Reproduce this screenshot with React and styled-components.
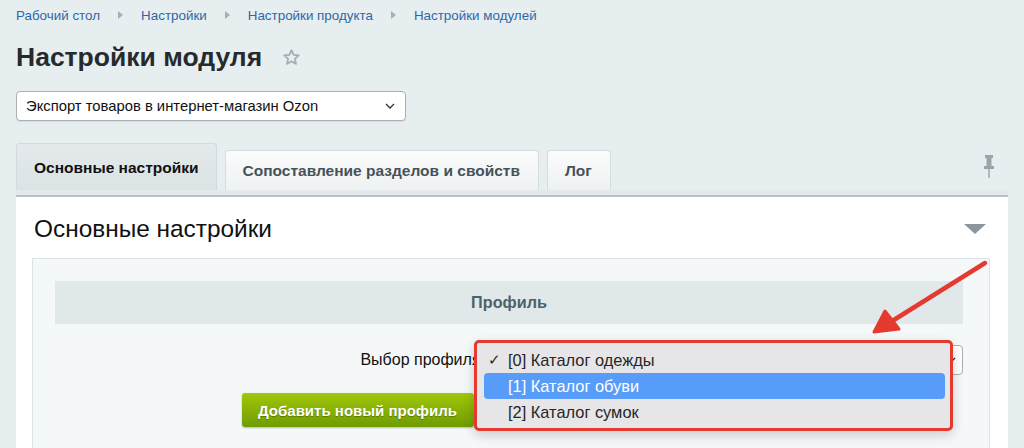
import React from 'react';
import styled, { createGlobalStyle } from 'styled-components';

const GlobalStyle = createGlobalStyle`
  html, body {
    margin: 0;
    padding: 0;
    background: #e7eef0;
    font-family: "Liberation Sans", Arial, sans-serif;
  }
`;

const Page = styled.div`
  width: 1024px;
  height: 448px;
  overflow: hidden;
  box-sizing: border-box;
  padding: 7px 16px 0 16px;
`;

const Breadcrumbs = styled.div`
  display: flex;
  align-items: center;
  height: 16px;
  font-size: 13.4px;
  color: #2f67a6;
`;

const Crumb = styled.span`
  white-space: nowrap;
`;

const CrumbSep = styled.span`
  width: 0;
  height: 0;
  margin: 0 18px 0 18px;
  border-top: 4px solid transparent;
  border-bottom: 4px solid transparent;
  border-left: 5px solid #a6b1b5;
`;

const TitleRow = styled.div`
  display: flex;
  align-items: center;
  margin-top: 18px;
  height: 32px;
`;

const Title = styled.h1`
  margin: 0;
  font-size: 26.5px;
  font-weight: 700;
  color: #262a2c;
  line-height: 32px;
`;

const StarIcon = styled.svg`
  margin-left: 20px;
  margin-top: 1px;
`;

const ModuleSelect = styled.div`
  margin-top: 18px;
  width: 390px;
  height: 30px;
  box-sizing: border-box;
  display: flex;
  align-items: center;
  justify-content: space-between;
  padding: 0 10px 0 9px;
  background: #fff;
  border: 1px solid #a9b1b4;
  border-radius: 4px;
  font-size: 14.8px;
  color: #111;
  box-shadow: 0 1px 1px rgba(0, 0, 0, 0.08);
`;

const TabsRow = styled.div`
  display: flex;
  align-items: flex-end;
  gap: 8px;
  margin-top: 22px;
  height: 47px;
`;

const Tab = styled.div`
  height: ${p => (p.active ? 47 : 40)}px;
  box-sizing: border-box;
  display: flex;
  align-items: center;
  padding: ${p => (p.active ? '1px 17px 0' : '0 18px 0 17px')};
  border: 1px solid ${p => (p.active ? '#d3dadd' : '#d6dcde')};
  border-bottom: none;
  border-radius: 4px 4px 0 0;
  background: ${p =>
    p.active
      ? 'linear-gradient(#e4eaec, #dbe3e5)'
      : 'linear-gradient(#fbfcfc, #eef1f2)'};
  font-size: 15.5px;
  font-weight: 700;
  color: ${p => (p.active ? '#111' : '#45525a')};
  white-space: nowrap;
`;

const PinBox = styled.div`
  margin-left: auto;
  align-self: center;
  padding-right: 13px;
  display: flex;
`;

const Band = styled.div`
  height: 7px;
  box-sizing: border-box;
  background: #e3eaec;
  border-bottom: 2px solid #b8c2c6;
  width: 992px;
`;

const Panel = styled.div`
  width: 992px;
  height: 260px;
  background: #fff;
  box-sizing: border-box;
`;

const PanelHead = styled.div`
  height: 61px;
  display: flex;
  align-items: center;
  justify-content: space-between;
  padding: 0 22px 0 18px;
`;

const PanelTitle = styled.h2`
  margin: 0;
  margin-top: 2px;
  font-size: 24.4px;
  font-weight: 400;
  color: #111;
`;

const Collapse = styled.span`
  width: 0;
  height: 0;
  border-left: 11px solid transparent;
  border-right: 11px solid transparent;
  border-top: 10px solid #8d959a;
  margin-top: 2px;
`;

const InnerBox = styled.div`
  position: relative;
  margin: 0 18px 0 16px;
  height: 200px;
  box-sizing: border-box;
  background: #f5f8f9;
  border: 1px solid #dbe3e6;
  border-bottom: none;
  padding: 22px 26px 0 22px;
`;

const SectionHead = styled.div`
  height: 43px;
  display: flex;
  align-items: center;
  justify-content: center;
  background: #e0e8ea;
  font-size: 16.2px;
  font-weight: 700;
  color: #4d6268;
`;

const FormRow = styled.div`
  display: grid;
  grid-template-columns: 432px 1fr;
  align-items: center;
  margin-top: 21px;
  height: 30px;
`;

const Label = styled.div`
  text-align: right;
  font-size: 16px;
  color: #111;
  padding-right: 2px;
  white-space: nowrap;
`;

const FieldCell = styled.div`
  position: relative;
  margin-left: 4px;
`;

const ProfileSelect = styled.div`
  height: 30px;
  box-sizing: border-box;
  display: flex;
  align-items: center;
  justify-content: flex-end;
  padding-right: 6px;
  background: #fff;
  border: 1px solid #a9b1b4;
  border-radius: 4px;
`;

const Menu = styled.div`
  position: absolute;
  left: -17px;
  top: -5px;
  width: 479px;
  height: 91px;
  box-sizing: border-box;
  border: 3px solid #e53a2f;
  border-radius: 5px;
  background: #e6e5e7;
  padding: 4px 5px 0 7px;
  box-shadow: 0 4px 12px rgba(0, 0, 0, 0.18);
`;

const MenuItem = styled.div`
  height: 26px;
  display: flex;
  align-items: center;
  border-radius: 4px;
  padding-left: 4px;
  font-size: 16.4px;
  color: ${p => (p.selected ? '#fff' : '#262626')};
  background: ${p => (p.selected ? '#589cf9' : 'transparent')};
`;

const Check = styled.span`
  width: 20px;
  font-size: 15px;
  color: #262626;
`;

const ButtonRow = styled.div`
  display: flex;
  margin-top: 18px;
  padding-left: 187px;
`;

const GreenButton = styled.div`
  height: 34px;
  box-sizing: border-box;
  display: flex;
  align-items: center;
  padding: 0 17px 0 16px;
  border-radius: 3px;
  background: linear-gradient(#a2c70a, #6f9b02);
  box-shadow: 0 1px 2px rgba(0, 0, 0, 0.25);
  color: #fff;
  font-size: 15px;
  font-weight: 700;
  text-shadow: 0 1px 1px rgba(0, 0, 0, 0.3);
  white-space: nowrap;
`;

const Arrow = styled.svg`
  position: absolute;
  left: 826px;
  top: -3px;
`;

const crumbs = ['Рабочий стол', 'Настройки', 'Настройки продукта', 'Настройки модулей'];

const profiles = [
  { text: '[0] Каталог одежды', checked: true },
  { text: '[1] Каталог обуви', selected: true },
  { text: '[2] Каталог сумок' }
];

const App = () => (
  <Page>
    <GlobalStyle />
    <Breadcrumbs>
      {crumbs.map((c, i) => (
        <React.Fragment key={c}>
          {i > 0 && <CrumbSep />}
          <Crumb>{c}</Crumb>
        </React.Fragment>
      ))}
    </Breadcrumbs>

    <TitleRow>
      <Title>Настройки модуля</Title>
      <StarIcon width="19" height="19" viewBox="0 0 24 24">
        <path
          d="M12 2.8l2.7 6 6.5.6-4.9 4.3 1.5 6.4L12 16.8l-5.8 3.3 1.5-6.4-4.9-4.3 6.5-.6z"
          fill="none"
          stroke="#a4adb2"
          strokeWidth="2.2"
          strokeLinejoin="round"
        />
      </StarIcon>
    </TitleRow>

    <ModuleSelect>
      <span>Экспорт товаров в интернет-магазин Ozon</span>
      <svg width="10" height="6" viewBox="0 0 10 6">
        <path d="M1 1l4 4 4-4" fill="none" stroke="#333" strokeWidth="1.3" />
      </svg>
    </ModuleSelect>

    <TabsRow>
      <Tab active>Основные настройки</Tab>
      <Tab>Сопоставление разделов и свойств</Tab>
      <Tab>Лог</Tab>
      <PinBox>
        <svg width="12" height="24" viewBox="0 0 12 24">
          <rect x="2" y="0" width="8" height="3" fill="#9ba4a8" />
          <rect x="3.5" y="3" width="5" height="8" fill="#9ba4a8" />
          <rect x="1" y="11" width="10" height="3" fill="#9ba4a8" />
          <rect x="5.3" y="14" width="1.4" height="9" fill="#9ba4a8" />
        </svg>
      </PinBox>
    </TabsRow>
    <Band />

    <Panel>
      <PanelHead>
        <PanelTitle>Основные настройки</PanelTitle>
        <Collapse />
      </PanelHead>

      <InnerBox>
        <SectionHead>Профиль</SectionHead>

        <FormRow>
          <Label>Выбор профиля:</Label>
          <FieldCell>
            <ProfileSelect>
              <svg width="8" height="6" viewBox="0 0 8 6">
                <path d="M1 1l3 3 3-3" fill="none" stroke="#333" strokeWidth="1.3" />
              </svg>
            </ProfileSelect>
            <Menu>
              {profiles.map(p => (
                <MenuItem key={p.text} selected={p.selected}>
                  <Check>{p.checked ? '✓' : ''}</Check>
                  {p.text}
                </MenuItem>
              ))}
            </Menu>
          </FieldCell>
        </FormRow>

        <ButtonRow>
          <GreenButton>Добавить новый профиль</GreenButton>
        </ButtonRow>

        <Arrow width="140" height="90" viewBox="0 0 140 90">
          <line x1="126" y1="7" x2="30" y2="67" stroke="#e53a2f" strokeWidth="4.5" strokeLinecap="round" />
          <path d="M15 76 L26 55 L40 73 Z" fill="#e53a2f" stroke="#e53a2f" strokeWidth="3" strokeLinejoin="round" />
        </Arrow>
      </InnerBox>
    </Panel>
  </Page>
);

export default App;
